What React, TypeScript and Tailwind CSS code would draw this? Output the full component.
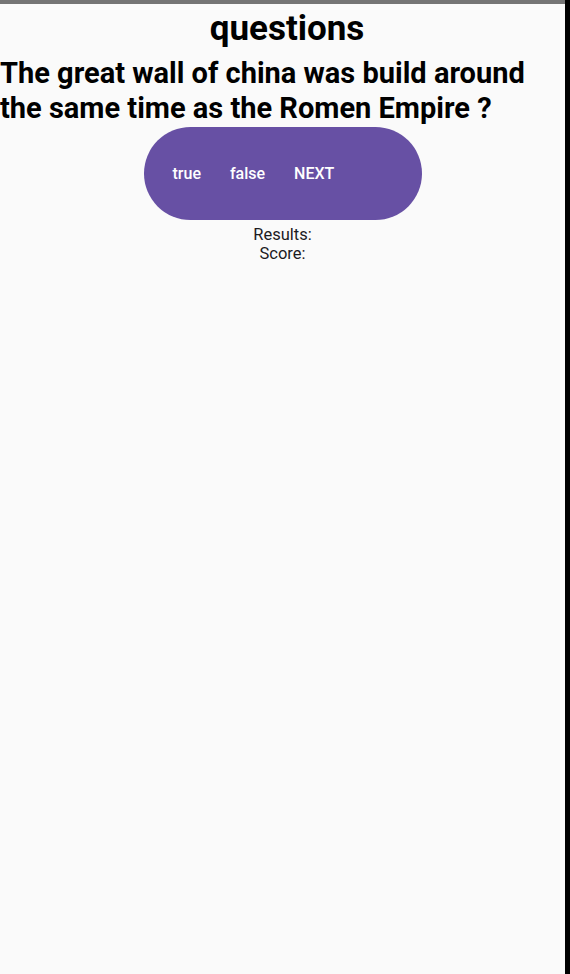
export default function App() {
  return (
    <div className="flex h-[974px] w-[570px] bg-black" style={{ fontFamily: "Roboto, sans-serif" }}>
      <div className="flex flex-1 flex-col bg-[#fafafa]">
        <div className="h-[4px] bg-[#757575]" />
        <h1 className="mt-[4px] pl-[9px] text-center text-[35px] font-bold leading-[42px] text-black">questions</h1>
        <p className="mt-[6px] text-[29px] font-bold leading-[35px] text-black">
          The great wall of china was build around the same time as the Romen Empire ?
        </p>
        <div className="mx-auto mt-[1px] flex h-[93px] w-[278px] items-center gap-[29px] rounded-full bg-[#6750a4] pl-[29px] text-[16px] font-medium text-white">
          <button>true</button>
          <button>false</button>
          <button>NEXT</button>
        </div>
        <div className="mt-[5px] text-center text-[16.5px] leading-[19px] text-[#1c1b1f]">
          <p>Results:</p>
          <p>Score:</p>
        </div>
      </div>
      <div className="w-[5px]" />
    </div>
  );
}
